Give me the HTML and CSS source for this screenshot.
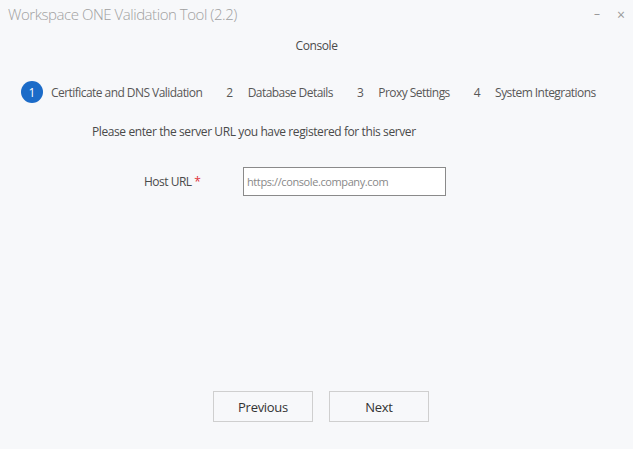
FILE: index.html
```html
<!DOCTYPE html>
<html>
<head>
<meta charset="utf-8">
<link rel="stylesheet" href="styles.css">
</head>
<body>
<div class="window">
  <div class="titlebar">
    <span class="title">Workspace ONE Validation Tool (2.2)</span>
    <div class="controls">
      <span class="ctl min">&#8211;</span>
      <span class="ctl close">&#215;</span>
    </div>
  </div>
  <div class="product">Console</div>
  <div class="steps">
    <div class="step active"><span class="num">1</span><span class="label">Certificate and DNS Validation</span></div>
    <div class="step"><span class="num">2</span><span class="label">Database Details</span></div>
    <div class="step"><span class="num">3</span><span class="label">Proxy Settings</span></div>
    <div class="step"><span class="num">4</span><span class="label">System Integrations</span></div>
  </div>
  <div class="intro">Please enter the server URL you have registered for this server</div>
  <div class="field">
    <label class="flabel">Host URL <span class="req">*</span></label>
    <div class="input">https://console.company.com</div>
  </div>
  <div class="spacer"></div>
  <div class="buttons">
    <button class="btn">Previous</button>
    <button class="btn">Next</button>
  </div>
</div>
</body>
</html>
```
FILE: styles.css
```css
html, body {
  margin: 0;
  padding: 0;
  background: #f7f8fa;
}
body {
  font-family: "Open Sans", "Noto Sans", sans-serif;
  color: #4a4a4a;
}
.window {
  width: 633px;
  height: 449px;
  display: flex;
  flex-direction: column;
  box-sizing: border-box;
}
.titlebar {
  display: flex;
  justify-content: space-between;
  align-items: center;
  height: 28px;
  padding: 0 0 0 8px;
}
.title {
  font-size: 15px;
  font-weight: 300;
  color: #a0a0a0;
  letter-spacing: -0.45px;
}
.controls {
  display: flex;
  gap: 10px;
  padding-right: 5px;
}
.ctl {
  color: #999;
  font-size: 12px;
  width: 14px;
  text-align: center;
}
.ctl.close {
  font-size: 14px;
}
.product {
  text-align: center;
  font-size: 12px;
  color: #4a4a4a;
  margin-top: 9px;
  letter-spacing: -0.4px;
}
.steps {
  display: flex;
  align-items: center;
  margin-top: 27px;
  padding-left: 21px;
  gap: 24px;
}
.step {
  display: flex;
  align-items: center;
  gap: 15px;
  font-size: 12px;
  color: #575757;
  letter-spacing: -0.55px;
}
.step.active {
  gap: 8px;
}
.num {
  font-size: 12px;
}
.step.active .num {
  width: 22px;
  height: 22px;
  border-radius: 50%;
  background: #1b6bc8;
  color: #fff;
  display: flex;
  align-items: center;
  justify-content: center;
  letter-spacing: 0;
}
.intro {
  margin-top: 20px;
  padding-left: 92px;
  font-size: 12px;
  color: #4a4a4a;
  letter-spacing: -0.4px;
}
.field {
  display: flex;
  align-items: center;
  margin-top: 27px;
  padding-left: 144px;
}
.flabel {
  width: 99px;
  font-size: 12px;
  color: #4a4a4a;
  letter-spacing: -0.5px;
}
.req {
  color: #e0313a;
}
.input {
  width: 203px;
  height: 29px;
  box-sizing: border-box;
  border: 1px solid #8a8a8a;
  background: #fff;
  font-size: 11px;
  color: #888;
  padding: 0 3px;
  display: flex;
  align-items: center;
  letter-spacing: -0.4px;
}
.spacer {
  flex: 1;
}
.buttons {
  display: flex;
  justify-content: center;
  gap: 16px;
  padding-bottom: 27px;
  padding-left: 9px;
}
.btn {
  width: 100px;
  height: 31px;
  background: #f7f8fa;
  border: 1px solid #cfcfcf;
  font-family: inherit;
  font-size: 13px;
  color: #333;
  letter-spacing: -0.3px;
}
```
